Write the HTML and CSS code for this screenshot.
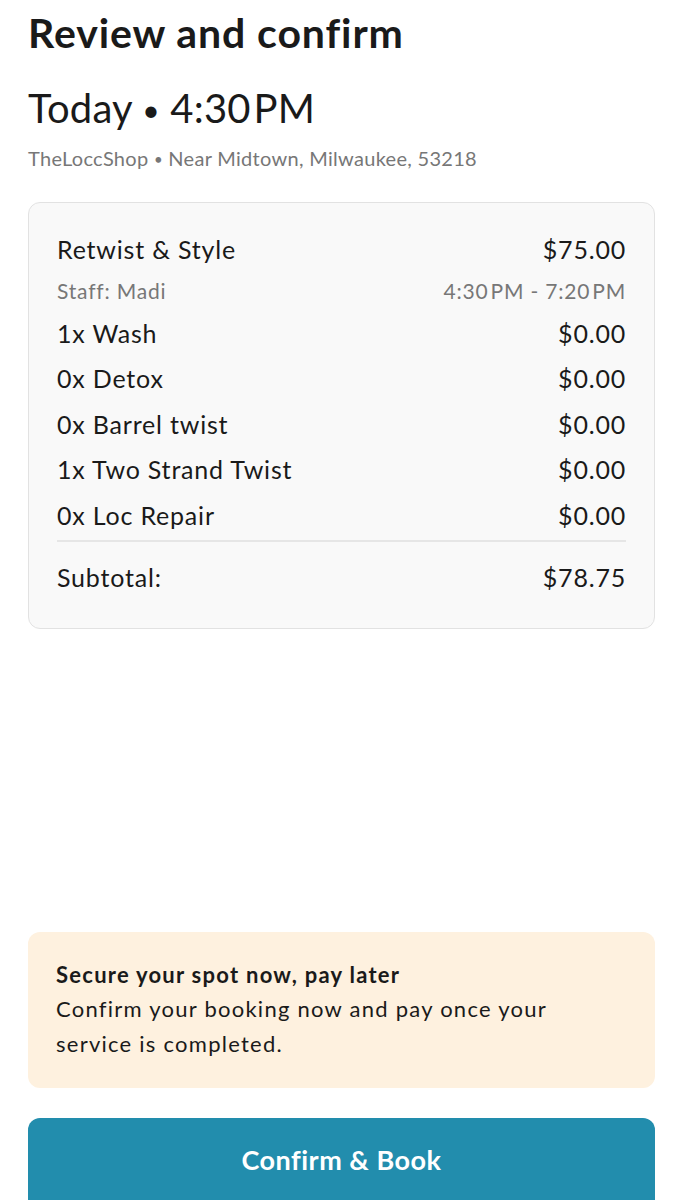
FILE: index.html
```html
<!DOCTYPE html>
<html lang="en">
<head>
  <meta charset="UTF-8">
  <meta name="viewport" content="width=device-width, initial-scale=1.0">
  <title>Review and confirm</title>
  <link rel="stylesheet" href="styles.css">
</head>
<body>
  <div class="page">
    <h1>Review and confirm</h1>
    <div class="when">Today <span class="dot">•</span> 4:30&#8202;PM</div>
    <div class="where">TheLoccShop <span class="dot">•</span> Near Midtown, Milwaukee, 53218</div>

    <div class="summary">
      <div class="row main">
        <span>Retwist &amp; Style</span>
        <span>$75.00</span>
      </div>
      <div class="row sub">
        <span>Staff: Madi</span>
        <span>4:30&#8202;PM - 7:20&#8202;PM</span>
      </div>
      <div class="row">
        <span>1x Wash</span>
        <span>$0.00</span>
      </div>
      <div class="row">
        <span>0x Detox</span>
        <span>$0.00</span>
      </div>
      <div class="row">
        <span>0x Barrel twist</span>
        <span>$0.00</span>
      </div>
      <div class="row">
        <span>1x Two Strand Twist</span>
        <span>$0.00</span>
      </div>
      <div class="row">
        <span>0x Loc Repair</span>
        <span>$0.00</span>
      </div>
      <div class="row total">
        <span>Subtotal:</span>
        <span>$78.75</span>
      </div>
    </div>

    <div class="spacer"></div>

    <div class="notice">
      <div class="notice-title">Secure your spot now, pay later</div>
      <div class="notice-text">Confirm your booking now and pay once your service is completed.</div>
    </div>

    <button class="confirm">Confirm &amp; Book</button>
  </div>
</body>
</html>
```

FILE: styles.css
```css
body {
  font-family: "Lato", "Open Sans", sans-serif;
  background-color: #fff;
  color: #1a1a1a;
  margin: 0;
}

.page {
  padding: 0 28px;
  display: flex;
  flex-direction: column;
  min-height: 1200px;
  box-sizing: border-box;
}

h1 {
  font-size: 41px;
  font-weight: 700;
  margin: 10px 0 0;
  line-height: 46px;
  letter-spacing: 0.9px;
}

.when {
  font-size: 40px;
  margin-top: 29px;
  line-height: 46px;
  letter-spacing: 0.2px;
}

.dot {
  font-size: 0.75em;
  vertical-align: 0.08em;
}

.where {
  font-size: 20px;
  color: #777;
  margin-top: 14px;
  letter-spacing: 0.3px;
}

.summary {
  margin-top: 32px;
  background: #f9f9f9;
  border: 1px solid #e2e2e2;
  border-radius: 12px;
  padding: 31px 28px 36px;
}

.row {
  display: flex;
  justify-content: space-between;
  font-size: 25px;
  line-height: 30px;
  margin-top: 15.5px;
  letter-spacing: 0.8px;
}

.row.main {
  margin-top: 0;
}

.row.sub {
  font-size: 21px;
  color: #777;
  margin-top: 12px;
}

.row.sub + .row {
  margin-top: 12px;
}

.row.total {
  border-top: 2px solid #e6e6e6;
  margin-top: 10px;
  padding-top: 20px;
}

.spacer {
  flex: 1;
}

.notice {
  background: #fef1df;
  border-radius: 12px;
  padding: 27px 28px 27px;
}

.notice-title {
  font-size: 22px;
  font-weight: 700;
  line-height: 32px;
  letter-spacing: 1.25px;
}

.notice-text {
  font-size: 22px;
  line-height: 35px;
  max-width: 520px;
  letter-spacing: 1.25px;
}

.confirm {
  margin-top: 30px;
  margin-bottom: -12px;
  height: 94px;
  border: none;
  border-radius: 12px;
  background-color: #228dad;
  color: #fff;
  font-family: inherit;
  font-size: 27px;
  font-weight: 700;
  letter-spacing: 0.5px;
  padding-bottom: 12px;
  cursor: pointer;
}
```
